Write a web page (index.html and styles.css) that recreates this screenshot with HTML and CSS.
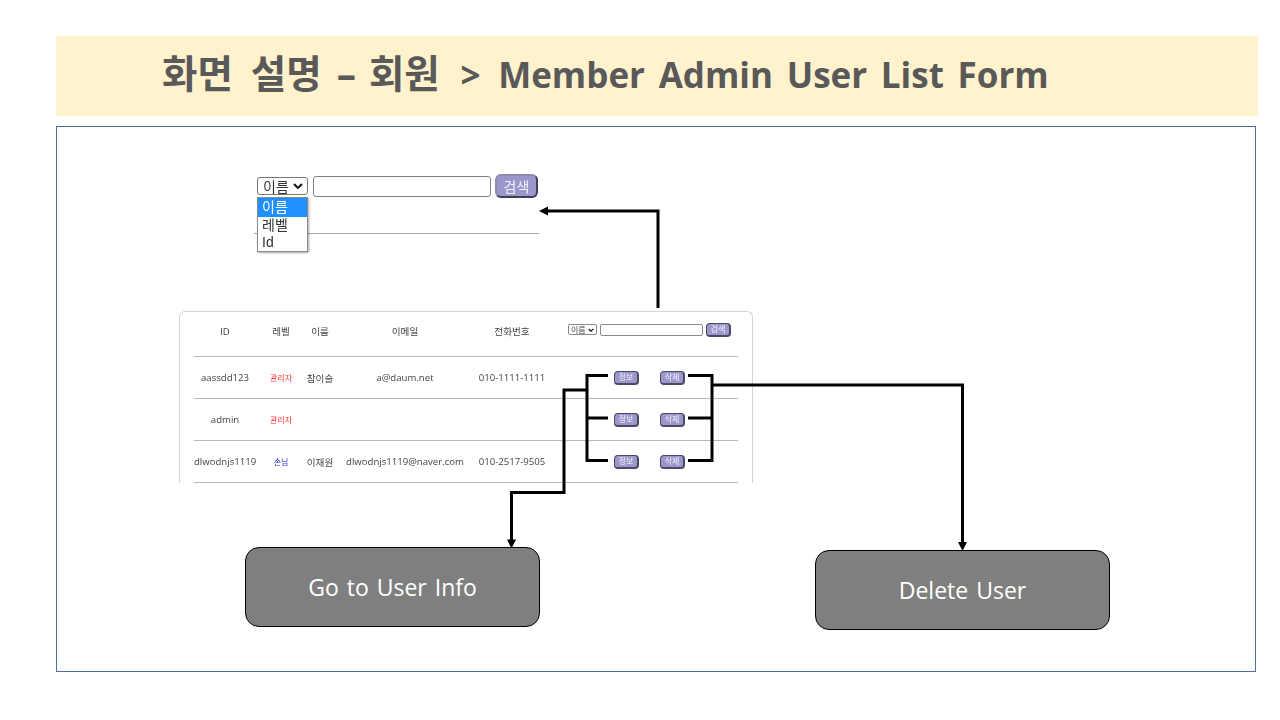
FILE: index.html
```html
<!DOCTYPE html>
<html lang="ko">
<head>
<meta charset="utf-8">
<title>Member Admin User List Form</title>
<link rel="stylesheet" href="styles.css">
</head>
<body>
<main class="slide">
  <header class="banner"><h1 class="banner-title"><span class="ko">화면 설명<span class="dash">–</span>회원</span> <span class="gt">&gt;</span> Member Admin User List Form</h1></header>
  <section class="panel"></section>

  <div class="shot-search">
    <div class="search-row">
      <div class="sel"><span>이름</span><svg class="chev" viewBox="0 0 10 6"><path d="M1 1l4 4 4-4" fill="none" stroke="#111" stroke-width="2"/></svg></div>
      <div class="inp"></div>
      <div class="btn">검색</div>
    </div>
    <div class="rule"></div>
    <ul class="drop">
      <li class="drop-on">이름</li>
      <li>레벨</li>
      <li>Id</li>
    </ul>
  </div>

  <div class="shot-table">
    <div class="row head">
      <div class="c id">ID</div><div class="c lv">레벨</div><div class="c nm">이름</div><div class="c em">이메일</div><div class="c ph">전화번호</div>
      <div class="mini-search">
        <div class="mini-sel"><span>이름</span><svg class="mini-chev" viewBox="0 0 10 6"><path d="M1 1l4 4 4-4" fill="none" stroke="#111" stroke-width="2"/></svg></div>
        <div class="mini-inp"></div>
        <div class="mini-btn">검색</div>
      </div>
    </div>
    <div class="row">
      <div class="c id">aassdd123</div><div class="c lv admin">관리자</div><div class="c nm">참이슬</div><div class="c em">a@daum.net</div><div class="c ph">010-1111-1111</div>
      <div class="acts"><div class="mini-btn">정보</div><div class="mini-btn">삭제</div></div>
    </div>
    <div class="row">
      <div class="c id">admin</div><div class="c lv admin">관리자</div><div class="c nm"></div><div class="c em"></div><div class="c ph"></div>
      <div class="acts"><div class="mini-btn">정보</div><div class="mini-btn">삭제</div></div>
    </div>
    <div class="row">
      <div class="c id">dlwodnjs1119</div><div class="c lv guest">손님</div><div class="c nm">이재원</div><div class="c em">dlwodnjs1119@naver.com</div><div class="c ph">010-2517-9505</div>
      <div class="acts"><div class="mini-btn">정보</div><div class="mini-btn">삭제</div></div>
    </div>
  </div>

  <svg class="wires" viewBox="0 0 1280 720" width="1280" height="720">
    <g fill="none" stroke="#000" stroke-width="3">
      <path d="M658 308V211H548"/>
      <path d="M608 375.500H587V460.500H608M587 418H608"/>
      <path d="M688 375.500H712V460.500H688M712 418H688"/>
      <path d="M712 385H962.500V543"/>
      <path d="M587 390H564V492.500H511.500V541"/>
    </g>
    <path d="M539 211l9-4.500v9z"/>
    <path d="M962.500 551l-4.500-9h9z"/>
    <path d="M511.500 548.500l-4.500-9h9z"/>
  </svg>

  <div class="node node-info">Go to User Info</div>
  <div class="node node-del">Delete User</div>
</main>
</body>
</html>
```
FILE: styles.css
```css
* { box-sizing: border-box; }
html, body { margin: 0; padding: 0; background: #fff; }
body { font-family: "Open Sans", "Noto Sans CJK KR", sans-serif; }
.slide { position: relative; width: 1280px; height: 720px; overflow: hidden; padding: 36px 22px 0 56px; }

.banner { height: 80px; background: #fff2cc; display: flex; align-items: center; padding: 0 0 6px 106px; }
.banner-title { margin: 0; font-size: 35px; font-weight: 700; color: #595959; word-spacing: 4.600px; white-space: nowrap; line-height: 1; }
.ko { font-size: 38.500px; word-spacing: 8px; }
.dash { margin: 0 13px 0 15px; }
.gt { margin-left: 7px; margin-right: 4px; }

.panel { margin-top: 10px; width: 1200px; height: 546px; border: 1px solid #4a7296; background: #fff; }

.shot-search { position: absolute; left: 254px; top: 173px; width: 285px; height: 80px; font-family: "Liberation Sans", "Noto Sans CJK KR", sans-serif; filter: blur(.3px); }
.search-row { display: flex; align-items: center; gap: 5px; padding-left: 3px; height: 26px; }
.sel { width: 51px; height: 18px; border: 1px solid #767676; border-radius: 3px; background: #fff; display: flex; align-items: center; justify-content: space-between; padding: 0 4px 0 5px; font-size: 14px; color: #333; }
.chev { width: 10px; height: 6px; }
.inp { width: 178px; height: 21px; border: 1px solid #808080; border-radius: 3px; background: #fff; }
.btn { width: 43px; height: 24px; margin-left: -1px; border-radius: 6px; border: 2px solid #3f3f5a; border-top-color: #8d8bb0; border-left-color: #8d8bb0; background: #9b97cb; color: #f3f3ff; font-size: 14px; display: flex; align-items: center; justify-content: center; }
.rule { margin: 34px 0 0 0; height: 1px; background: #a9a9a9; }
.drop { position: absolute; left: 3px; top: 24px; width: 51px; height: 55px; margin: 0; padding: 0; list-style: none; background: #fff; border: 1px solid #8a8a8a; box-shadow: 1px 1px 2px rgba(0,0,0,.35); font-size: 14px; color: #333; }
.drop li { height: 17px; line-height: 17px; padding-left: 4px; }
.drop .drop-on { height: 19px; line-height: 19px; background: #1e90ff; color: #fff; }

.shot-table { position: absolute; left: 179px; top: 311px; width: 574px; height: 172px; padding: 0 14px; border: 1px solid #d4d4d4; border-bottom: 0; border-radius: 6px 6px 0 0; font-size: 9.600px; color: #444; filter: blur(.3px); }
.row { display: flex; align-items: center; height: 42px; border-bottom: 1px solid #b8b8b8; }
.row.head { height: 45px; padding-bottom: 6px; }
.c { text-align: center; white-space: nowrap; flex: none; }
.id { width: 62px; }
.lv { width: 50px; }
.nm { width: 28px; }
.em { width: 142px; }
.ph { width: 72px; }
.admin { color: #f33; font-size: 8px; }
.guest { color: #33d; font-size: 8px; }
.mini-search { display: flex; align-items: center; gap: 3px; margin: 0 0 3px 20px; }
.mini-sel { width: 29px; height: 11px; border: 1px solid #8a8a8a; border-radius: 2px; display: flex; align-items: center; justify-content: space-between; padding: 0 2px; font-size: 8px; line-height: 1; }
.mini-chev { width: 6px; height: 4px; }
.mini-inp { width: 103px; height: 12px; border: 1px solid #8a8a8a; border-radius: 2px; }
.mini-btn { width: 25px; height: 14px; border-radius: 4px; border: 1px solid #4a4a66; border-right-width: 2px; border-bottom-width: 2px; background: #9b97cb; color: #f3f3ff; font-size: 8px; display: flex; align-items: center; justify-content: center; line-height: 1; }
.acts { display: flex; gap: 21px; margin-left: 66px; }

.wires { position: absolute; left: 0; top: 0; pointer-events: none; }

.node { position: absolute; width: 295px; height: 80px; padding-bottom: 1px; background: #7f7f7f; border: 1px solid #000; border-radius: 14px; color: #fff; font-size: 23px; word-spacing: 2px; display: flex; align-items: center; justify-content: center; }
.node-info { left: 245px; top: 547px; }
.node-del { left: 815px; top: 550px; }
```
